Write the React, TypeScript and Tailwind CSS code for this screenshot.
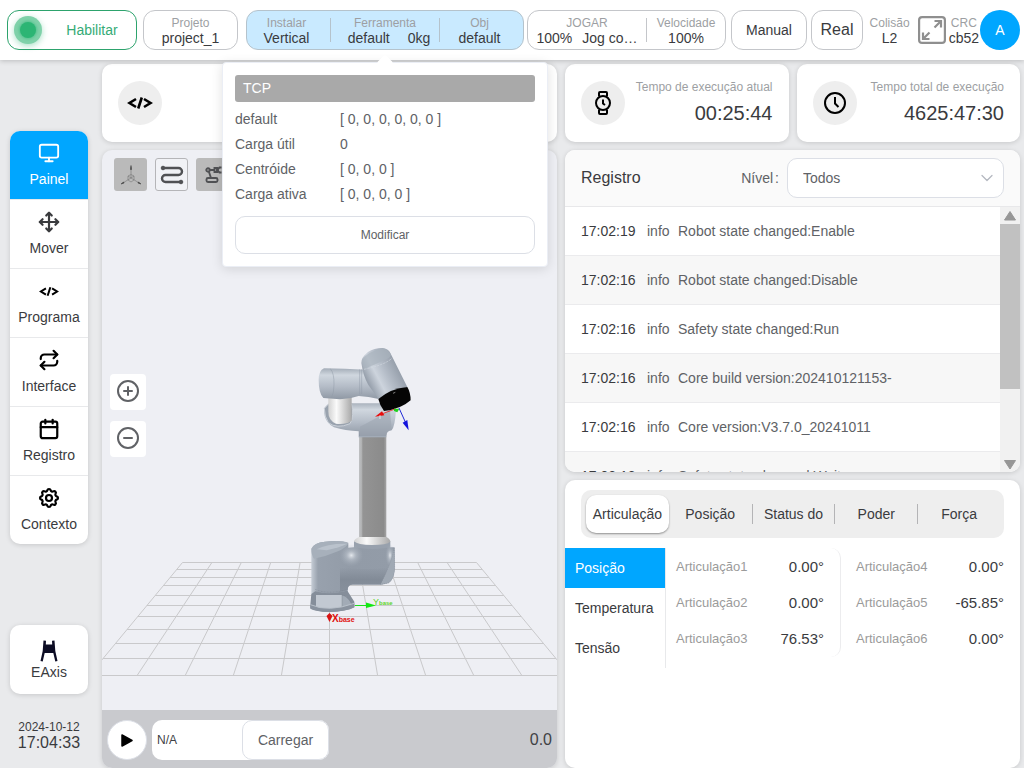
import type { ReactNode } from "react";
import {
  Calendar,
  ChevronDown,
  CircleMinus,
  CirclePlus,
  Monitor,
  Move,
  Repeat,
} from "lucide-react";
import { TbSettings } from "react-icons/tb";

const LOGS = [
  { time: "17:02:19", level: "info", message: "Robot state changed:Enable" },
  { time: "17:02:16", level: "info", message: "Robot state changed:Disable" },
  { time: "17:02:16", level: "info", message: "Safety state changed:Run" },
  { time: "17:02:16", level: "info", message: "Core build version:202410121153-" },
  { time: "17:02:16", level: "info", message: "Core version:V3.7.0_20241011" },
  { time: "17:02:13", level: "info", message: "Safety state changed:Wait" },
];

const TCP_ROWS = [
  ["default", "[ 0, 0, 0, 0, 0, 0 ]"],
  ["Carga útil", "0"],
  ["Centróide", "[ 0, 0, 0 ]"],
  ["Carga ativa", "[ 0, 0, 0, 0 ]"],
];

const JOINTS_LEFT = [
  ["Articulação1", "0.00°"],
  ["Articulação2", "0.00°"],
  ["Articulação3", "76.53°"],
];

const JOINTS_RIGHT = [
  ["Articulação4", "0.00°"],
  ["Articulação5", "-65.85°"],
  ["Articulação6", "0.00°"],
];

function CodeIcon({ className }: { className: string }) {
  return (
    <svg viewBox="0 0 26 14" fill="none" stroke="currentColor" strokeWidth="2.6" className={className} aria-hidden="true">
      <path d="M9 3 L2.500 7 L9 11" />
      <path d="M17 3 L23.500 7 L17 11" />
      <path d="M14.800 1.500 L11.200 12.500" />
    </svg>
  );
}

function AxesIcon() {
  return (
    <svg viewBox="0 0 24 24" fill="none" stroke="#777" strokeWidth="0.6" className="size-6" aria-hidden="true">
      <path d="M12 15V4M12 15 3 20.500M12 15 21 20.500" />
      <path d="M12 11.500 15 13v4l-3 2-3-2v-4zM9 13l3 2 3-2" />
      <path d="M11.500 6.500 12 2.500l.5 4zM2 21l2.500-2 .6 1zM22 21l-2.500-2-.6 1z" fill="#444" stroke="#444" />
    </svg>
  );
}

function PathIcon() {
  return (
    <svg viewBox="0 0 24 20" fill="none" stroke="#505154" strokeWidth="2.4" className="h-5 w-6" aria-hidden="true">
      <path d="M3 3h15.500a3.500 3.500 0 0 1 0 7h-13a3.500 3.500 0 0 0 0 7H21" />
      <circle cx="3" cy="3" r="1.800" fill="#505154" strokeWidth="1" />
      <circle cx="21" cy="17" r="1.800" fill="#505154" strokeWidth="1" />
    </svg>
  );
}

function ArmIcon() {
  return (
    <svg viewBox="0 0 20 18" fill="none" stroke="#505154" strokeWidth="1.9" className="h-[18px] w-5" aria-hidden="true">
      <circle cx="5" cy="4" r="1.700" />
      <path d="M6.500 4H11M6 6l2 6" />
      <rect x="3.500" y="12" width="11" height="4" rx="1.500" />
      <path d="M11.500 1v6M11.500 2h2.500v4h-2.500M18.500 1.500H16.500L15 3v2l1.500 1.500h2" />
    </svg>
  );
}

function GantryIcon() {
  return (
    <svg viewBox="0 0 18 22" fill="#0c0c24" className="h-[22px] w-[18px]" aria-hidden="true">
      <path d="M3.500 0.500 6 .8 5.800 4.500h6.400L12 .8 14.500.5 15.300 11 17.500 21l-2.200.5L13.300 13H4.700L2.700 21.500.5 21 2.700 11z" />
    </svg>
  );
}

function WatchIcon() {
  return (
    <svg viewBox="0 0 24 26" fill="none" stroke="black" strokeWidth="2" className="h-[26px] w-6" aria-hidden="true">
      <circle cx="12" cy="13" r="7" />
      <path d="M12 9.500v4l2 1.500M8 6.500V3a1 1 0 0 1 1-1h6a1 1 0 0 1 1 1v3.500M8 19.500V23a1 1 0 0 0 1 1h6a1 1 0 0 0 1-1v-3.500" />
    </svg>
  );
}

function ClockIcon() {
  return (
    <svg viewBox="0 0 24 24" fill="none" stroke="black" strokeWidth="2" className="size-6" aria-hidden="true">
      <circle cx="12" cy="12" r="10" />
      <path d="M12 6v6.500l3.500 3.500" />
    </svg>
  );
}

function ExpandIcon() {
  return (
    <svg viewBox="0 0 28 28" fill="none" stroke="#8f8f8f" strokeWidth="2.2" className="size-7" aria-hidden="true">
      <rect x="1.100" y="1.100" width="25.800" height="25.800" rx="3" />
      <path d="M16.500 11.500 23 5M16.500 5H23v6.500M11.500 16.500 5 23M5 16.500V23h6.500" />
    </svg>
  );
}

const GRID_ROWS = [562, 569, 577, 585, 595, 605, 616, 629, 643, 658, 675];
const GRID_COLUMNS = [-5, -4, -3, -2, -1, 0, 1, 2, 3, 4, 5];

function RobotScene() {
  return (
    <svg viewBox="102 150 455 560" className="absolute inset-0 h-full w-full" role="img" aria-label="Robô 3D">
      <defs>
        <linearGradient id="tube" x1="0" x2="1" y1="0" y2="0">
          <stop offset="0" stopColor="#bfc1c3" />
          <stop offset="0.100" stopColor="#b0b1b2" />
          <stop offset="0.140" stopColor="#949494" />
          <stop offset="0.900" stopColor="#8b8b8b" />
          <stop offset="1" stopColor="#a5a5a5" />
        </linearGradient>
        <linearGradient id="shellV" x1="0" x2="0" y1="0" y2="1">
          <stop offset="0" stopColor="#a4adb8" />
          <stop offset="0.220" stopColor="#d0d7df" />
          <stop offset="0.600" stopColor="#b3bbc6" />
          <stop offset="1" stopColor="#8f98a4" />
        </linearGradient>
        <linearGradient id="shellTilt" gradientUnits="userSpaceOnUse" x1="228" y1="145" x2="325" y2="95">
          <stop offset="0" stopColor="#98a1ad" />
          <stop offset="0.300" stopColor="#cdd4dd" />
          <stop offset="0.550" stopColor="#b5bdc8" />
          <stop offset="1" stopColor="#8f98a4" />
        </linearGradient>
        <linearGradient id="white" x1="0" x2="1" y1="0" y2="0">
          <stop offset="0" stopColor="#d2d2d2" />
          <stop offset="0.350" stopColor="#fafafa" />
          <stop offset="1" stopColor="#a9a9a9" />
        </linearGradient>
        <linearGradient id="base" x1="0" x2="1" y1="0" y2="0">
          <stop offset="0" stopColor="#c5ccd5" />
          <stop offset="0.080" stopColor="#98a1ad" />
          <stop offset="0.500" stopColor="#929ba7" />
          <stop offset="1" stopColor="#939ca8" />
        </linearGradient>
        <linearGradient id="underside" x1="0" x2="0" y1="0" y2="1">
          <stop offset="0" stopColor="#828b97" stopOpacity="0" />
          <stop offset="0.500" stopColor="#828b97" />
          <stop offset="1" stopColor="#87909c" />
        </linearGradient>
        <radialGradient id="glow">
          <stop offset="0" stopColor="#eef1f5" stopOpacity="0.900" />
          <stop offset="0.400" stopColor="#c5ccd5" stopOpacity="0.500" />
          <stop offset="1" stopColor="#a5aeba" stopOpacity="0" />
        </radialGradient>
      </defs>

      {/* Floor grid */}
      <g stroke="#c9c9cb" strokeWidth="1">
        {GRID_ROWS.map((y) => {
          const half = 147 + ((y - 562) / 113) * 93.5;
          return <line key={y} x1={329.5 - half} x2={329.5 + half} y1={y + 0.5} y2={y + 0.5} />;
        })}
        {GRID_COLUMNS.map((n) => (
          <line key={n} x1={329.5 + n * 29.4} y1="562.5" x2={329.5 + n * 48.1} y2="675.5" />
        ))}
      </g>

      {/* Base and shoulder */}
      <g transform="translate(290 480) scale(0.3333)">
        <path d="M207 -145H289V185H207z" fill="url(#tube)" />
        <path d="M192 184H301V212H192z" fill="#98a1ad" />
        <path d="M192 184Q194 176 207 171H289Q301 177 301 185Q290 195 246 195Q202 195 192 184z" fill="url(#white)" />
        <path d="M64 206Q72 188 105 185Q155 180 175 190V203L192 202Q246 212 301 202L314 202V270Q311 300 296 309L275 314H188Q173 314 173 330V342H64z" fill="url(#base)" />
        <path d="M150 262Q240 272 300 262L290 304L272 313H188Q173 314 173 330L150 335z" fill="url(#underside)" />
        <ellipse cx="184" cy="226" rx="36" ry="34" fill="url(#glow)" />
        <ellipse cx="300" cy="226" rx="14" ry="34" fill="url(#glow)" />
        <path d="M64 206Q72 188 105 185Q155 180 175 188Q172 203 140 215Q105 230 72 236Q64 225 64 206z" fill="#a7b0bb" />
        <path d="M80 208Q110 190 172 191Q150 202 110 211z" fill="#bac2cc" />
        <path d="M313 205Q303 252 272 313L296 309Q314 295 314 262z" fill="#a0a9b4" stroke="#7b8490" strokeDasharray="3 3" />
        <path d="M75 328Q115 345 172 329" fill="none" stroke="#737c89" strokeDasharray="6 3" />
        <path d="M64 342L76 334Q115 347 172 332L193 365V382Q170 395 120 396Q75 395 61 384V374z" fill="#858e9a" />
        <path d="M78 345H156V385H78z" fill="#c2c9d2" />
        <path d="M156 345Q176 350 186 375L156 384z" fill="#a2abb6" stroke="#6e7784" />
        <path d="M61 374Q115 398 193 370V382Q165 395 120 396Q75 395 61 386z" fill="#8a939f" />
        <path d="M61 374Q115 398 193 370" fill="none" stroke="#b9c1ca" strokeWidth="3" />
      </g>

      {/* Elbow, wrist and flange */}
      <g transform="translate(290 330) scale(0.3333)">
        <path d="M206 290H289V322H206z" fill="#a2abb7" />
        <path d="M102 250Q106 225 128 217L190 220H310L318 240Q315 290 305 301Q290 302 288 318H207V304Q165 302 132 292Q106 278 102 250z" fill="url(#shellV)" />
        <path d="M210 290Q250 270 300 240L305 300Q290 302 288 318H210z" fill="#9ca5b1" opacity="0.600" />
        <path d="M103 235Q116 218 130 213L184 220Q194 258 180 281Q140 298 115 278Q103 260 103 235z" fill="#99a2ae" stroke="#cbd1d9" strokeWidth="3" />
        <path d="M115 200H185V272Q165 285 138 281Q115 271 115 245z" fill="url(#white)" />
        <path d="M86 150Q86 122 102 115Q165 116 226 119L266 207Q235 200 206 198Q180 207 150 208L100 204Q86 190 86 150z" fill="url(#shellV)" />
        <path d="M121 116Q133 130 132 165Q132 190 124 204M209 118V194M215 118V192" fill="none" stroke="#929ba7" strokeWidth="1.500" />
        <path d="M214 99Q213 83 234 66Q252 54 278 54Q296 57 301 69L352 171Q315 180 266 207L235 165Q220 140 214 99z" fill="url(#shellTilt)" />
        <path d="M216 90Q230 66 278 54Q296 57 303 74Q302 82 292 86Q250 106 222 116z" fill="#aab3be" opacity="0.700" />
        <path d="M222 118Q285 105 307 84" fill="none" stroke="#d2d8df" strokeWidth="2" strokeDasharray="7 3" />
        <path d="M265 207Q303 175 352 171Q362 188 362 211Q332 238 282 243Q270 228 265 207z" fill="#050505" />
        <path d="M309 190L316 187" stroke="#bbb" strokeWidth="2" />
        <path d="M318 236L275 252" stroke="#e00" strokeWidth="2" />
        <path d="M255 260L276 244L283 256z" fill="#e80c0c" />
        <path d="M270 255V267" stroke="#fff" strokeWidth="2" />
        <path d="M312 236H328L322 247L312 243z" fill="#1fd21f" />
        <path d="M327 234L346 276" stroke="#1e28d6" strokeWidth="3" />
        <path d="M338 278L352 270L356 301z" fill="#1414dd" />
      </g>

      {/* Base frame axes */}
      <path d="M355 605.500H367" stroke="#1be01b" strokeWidth="1" />
      <path d="M366 602.500L376 605.500L366 608z" fill="#14e814" />
      <path d="M326.500 616L329.500 613L332.500 616L329.500 622z" fill="#d91414" />
      <g fontFamily="Liberation Sans, Arial, sans-serif" fontWeight="700">
        <text x="332" y="622" fontSize="10" fill="#e01010">
          X<tspan fontSize="7">base</tspan>
        </text>
        <text x="373" y="605" fontSize="9" fontWeight="400" fill="#5fd42a">
          Y<tspan fontSize="6" fontWeight="700">base</tspan>
        </text>
      </g>
    </svg>
  );
}

function Stat({ label, children }: { label: string; children: ReactNode }) {
  return (
    <div className="text-center">
      <div className="text-xs leading-4 text-[#9d9fa3]">{label}</div>
      <div className="text-sm leading-[15px] whitespace-nowrap text-[#3a3b3e]">{children}</div>
    </div>
  );
}

function TcpPopover() {
  return (
    <div className="absolute top-[51px] left-1/2 z-10 w-[326px] -translate-x-1/2 rounded border border-[#ebeef5] bg-white p-3 text-left text-sm text-[#606266] shadow-[0_2px_12px_rgba(0,0,0,0.12)]">
      <div className="absolute -top-1.5 left-1/2 size-3 -translate-x-1/2 rotate-45 rounded-xs bg-white" />
      <h2 className="relative rounded-[3px] bg-[#a9a9a9] px-2 text-sm leading-[27px] text-white">TCP</h2>
      <dl className="mt-[5px] leading-[25px]">
        {TCP_ROWS.map(([name, value]) => (
          <div key={name} className="flex">
            <dt className="w-[105px]">{name}</dt>
            <dd>{value}</dd>
          </div>
        ))}
      </dl>
      <button type="button" className="mt-[9px] h-[38px] w-full rounded-[10px] border border-[#dcdfe6] text-xs">
        Modificar
      </button>
    </div>
  );
}

function TopBar() {
  return (
    <header className="relative z-20 flex h-[60px] shrink-0 items-center bg-white pr-1 pl-[7px] shadow-[0_1px_5px_rgba(0,0,0,0.2)]">
      <button type="button" className="flex h-10 w-[130px] items-center rounded-xl border border-[#2da36d] pl-1.5 text-sm text-[#35ab76]">
        <span className="flex size-7 items-center justify-center rounded-full bg-[#7fd1a9] shadow-[0_2px_6px_rgba(43,180,115,0.4)]">
          <span className="size-4 rounded-full bg-[#2cb574] shadow-[0_0_3px_1px_#4fc18c]" />
        </span>
        <span className="flex-1 pl-1.5">Habilitar</span>
      </button>
      <div className="ml-1.5 flex h-10 w-[95px] items-center justify-center rounded-xl border border-[#c4c6ca]">
        <Stat label="Projeto">project_1</Stat>
      </div>
      <div className="ml-2 flex h-10 w-[278px] items-center rounded-xl border border-[#b5c3cc] bg-[#c9eaff]">
        <div className="flex h-6 w-[84px] items-center justify-center border-r border-[#b5c3cc] pr-1">
          <Stat label="Instalar">Vertical</Stat>
        </div>
        <div className="relative flex h-6 w-[109px] items-center justify-center border-r border-[#b5c3cc]">
          <Stat label="Ferramenta">
            <span className="flex gap-[18px] pl-2">
              <span>default</span>
              <span>0kg</span>
            </span>
          </Stat>
          <div className="absolute -top-[7px] left-1/2">
            <TcpPopover />
          </div>
        </div>
        <div className="flex flex-1 items-center justify-center pr-1">
          <Stat label="Obj">default</Stat>
        </div>
      </div>
      <div className="ml-[3px] flex h-10 w-[199px] items-center rounded-xl border border-[#c4c6ca]">
        <div className="flex h-6 w-[119px] items-center justify-center border-r border-[#c4c6ca]">
          <Stat label="JOGAR">
            <span className="flex gap-[10px]">
              <span>100%</span>
              <span>Jog co…</span>
            </span>
          </Stat>
        </div>
        <div className="flex flex-1 items-center justify-center">
          <Stat label="Velocidade">100%</Stat>
        </div>
      </div>
      <button type="button" className="ml-[5px] h-10 w-[76px] rounded-xl border border-[#c4c6ca] text-sm text-[#3a3b3e]">
        Manual
      </button>
      <button type="button" className="ml-1 h-10 w-[52px] rounded-xl border border-[#c4c6ca] text-base text-[#3a3b3e]">
        Real
      </button>
      <div className="ml-auto flex items-center">
        <Stat label="Colisão">L2</Stat>
        <button type="button" aria-label="Tela cheia" className="mr-[3px] ml-2">
          <ExpandIcon />
        </button>
        <Stat label="CRC">cb52</Stat>
        <button type="button" className="ml-px size-10 rounded-full bg-[#00a6ff] text-sm text-white">
          A
        </button>
      </div>
    </header>
  );
}

const NAV_ITEMS = [
  { label: "Painel", icon: <Monitor size={22} strokeWidth={2} /> },
  { label: "Mover", icon: <Move size={22} strokeWidth={2.4} /> },
  { label: "Programa", icon: <CodeIcon className="h-[11px] w-5 text-black" /> },
  { label: "Interface", icon: <Repeat size={22} strokeWidth={2.4} color="black" /> },
  { label: "Registro", icon: <Calendar size={22} strokeWidth={2.4} color="black" /> },
  { label: "Contexto", icon: <TbSettings size={24} strokeWidth={2.2} color="black" /> },
];

function Sidebar() {
  return (
    <aside className="flex w-[102px] shrink-0 flex-col pr-[14px] pl-[10px]">
      <nav className="mt-[71px] overflow-hidden rounded-[10px] bg-white shadow-[0_1px_5px_rgba(0,0,0,0.15)]">
        {NAV_ITEMS.map((item, i) => (
          <a
            key={item.label}
            href="#"
            className={
              i === 0
                ? "flex h-[68px] flex-col items-center bg-[#00a6ff] pt-[10px] text-sm text-white"
                : "flex h-[69px] flex-col items-center border-t border-[#e8e9eb] pt-[10px] text-sm text-[#3a3b3e]"
            }
          >
            <span className="flex h-6 items-center">{item.icon}</span>
            <span className="mt-1">{item.label}</span>
          </a>
        ))}
      </nav>
      <a href="#" className="mt-auto flex h-[69px] flex-col items-center rounded-[10px] bg-white pt-[15px] text-sm text-[#3a3b3e] shadow-[0_1px_5px_rgba(0,0,0,0.15)]">
        <GantryIcon />
        EAxis
      </a>
      <div className="mt-[25px] mb-[17px] text-center whitespace-nowrap text-[#3a3b3e]">
        <div className="text-xs leading-4">2024-10-12</div>
        <div className="text-base leading-4">17:04:33</div>
      </div>
    </aside>
  );
}

function RobotPanel() {
  return (
    <section className="flex min-w-0 flex-1 flex-col gap-2">
      <div className="flex h-[78px] items-center rounded-[10px] bg-white px-4 shadow-[0_1px_5px_rgba(0,0,0,0.15)]">
        <div className="flex size-11 items-center justify-center rounded-full bg-[#eee]">
          <CodeIcon className="h-[14px] w-[26px] text-black" />
        </div>
      </div>
      <div className="flex flex-1 flex-col overflow-hidden rounded-[10px] bg-[#eeeff4] shadow-[0_1px_5px_rgba(0,0,0,0.15)]">
        <div className="relative flex-1">
          <RobotScene />
          <div className="absolute top-2 left-3 flex gap-2">
            <button type="button" aria-label="Eixos" className="flex size-[33px] items-center justify-center rounded-[3px] bg-[#bababa]">
              <AxesIcon />
            </button>
            <button type="button" aria-label="Trajetória" className="flex size-[33px] items-center justify-center rounded-[3px] border border-[#b5b5b8] bg-[#f1f2f6]">
              <PathIcon />
            </button>
            <button type="button" aria-label="Braço" className="flex size-[33px] items-center justify-center rounded-[3px] bg-[#bababa]">
              <ArmIcon />
            </button>
          </div>
          <div className="absolute top-56 left-2 flex flex-col gap-[11px] text-[#606266]">
            <button type="button" aria-label="Aproximar" className="flex size-9 justify-center rounded bg-white pt-[5px]">
              <CirclePlus size={24} />
            </button>
            <button type="button" aria-label="Afastar" className="flex size-9 justify-center rounded bg-white pt-[5px]">
              <CircleMinus size={24} />
            </button>
          </div>
        </div>
        <div className="flex h-[58px] items-center bg-[#c9cace] px-[5px] pt-0.5">
          <button type="button" aria-label="Executar" className="flex size-10 items-center justify-center rounded-full border border-[#dcdfe6] bg-white">
            <svg viewBox="0 0 12 13" className="h-[13px] w-3" aria-hidden="true">
              <path d="M1 1 11 6.500 1 12z" stroke="black" strokeWidth="1.500" strokeLinejoin="round" />
            </svg>
          </button>
          <div className="ml-[5px] flex h-10 w-[177px] rounded-[10px] bg-white">
            <input aria-label="Programa" defaultValue="N/A" className="w-[90px] pl-[5px] text-xs text-[#404144] outline-none" />
            <button type="button" className="flex-1 rounded-[10px] border border-[#dcdfe6] text-sm text-[#606266]">
              Carregar
            </button>
          </div>
          <span className="ml-auto text-base text-[#404144]">0.0</span>
        </div>
      </div>
    </section>
  );
}

function RuntimeCard({ label, value, children }: { label: string; value: string; children: ReactNode }) {
  return (
    <div className="flex h-[78px] flex-1 items-center justify-between rounded-[10px] bg-white px-4 shadow-[0_1px_5px_rgba(0,0,0,0.15)]">
      <div className="flex size-11 shrink-0 items-center justify-center rounded-full bg-[#eee]">{children}</div>
      <div className="text-right">
        <div className="text-xs leading-4 whitespace-nowrap text-[#9d9fa3]">{label}</div>
        <div className="mt-1 text-xl leading-7 text-[#3a3b3e]">{value}</div>
      </div>
    </div>
  );
}

function LogPanel() {
  return (
    <div className="overflow-hidden rounded-[10px] bg-white shadow-[0_1px_5px_rgba(0,0,0,0.15)]">
      <div className="flex h-[57px] items-center border-b border-[#e8e8ea] bg-[#fafafa] px-4">
        <h2 className="text-base text-[#3a3b3e]">Registro</h2>
        <label htmlFor="level" className="ml-auto flex gap-0.5 text-sm text-[#606266]">
          <span>Nível</span>
          <span>:</span>
        </label>
        <div className="relative ml-2">
          <select id="level" className="h-10 w-[217px] appearance-none rounded-[10px] border border-[#dcdfe6] bg-white pl-[15px] text-sm text-[#606266]">
            <option>Todos</option>
          </select>
          <ChevronDown size={20} strokeWidth={1.5} color="#b4b8c0" className="pointer-events-none absolute top-[10px] right-[7px]" />
        </div>
      </div>
      <div className="flex h-[265px]">
        <ul className="min-w-0 flex-1 overflow-hidden">
          {LOGS.map((log, i) => (
            <li
              key={i}
              className="flex h-[49px] items-center border-b border-[#ebebed] pl-4 text-sm text-[#606266] even:bg-[#f7f7f7]"
            >
              <span className="w-[66px] text-[#3a3b3e]">{log.time}</span>
              <span className="w-[31px]">{log.level}</span>
              <span>{log.message}</span>
            </li>
          ))}
        </ul>
        {/* Scroll bar */}
        <div className="flex w-5 flex-col bg-[#f1f1f1]">
          <svg viewBox="0 0 20 17" className="h-[17px] w-5" aria-hidden="true">
            <path d="M4.500 13 10 4.500 15.500 13z" fill="#969696" stroke="#969696" strokeLinejoin="round" />
          </svg>
          <div className="h-[165px] bg-[#c1c1c1]" />
          <svg viewBox="0 0 20 17" className="mt-auto h-[17px] w-5" aria-hidden="true">
            <path d="M4.500 5.500 10 14 15.500 5.500z" fill="#969696" stroke="#969696" strokeLinejoin="round" />
          </svg>
        </div>
      </div>
    </div>
  );
}

function JointList({ rows }: { rows: string[][] }) {
  return (
    <dl className="pt-px">
      {rows.map(([name, value]) => (
        <div key={name} className="flex h-9 items-center justify-between">
          <dt className="text-[13px] text-[#9b9b9b]">{name}</dt>
          <dd className="text-[15px] text-[#3a3b3e]">{value}</dd>
        </div>
      ))}
    </dl>
  );
}

function JointPanel() {
  return (
    <div className="flex-1 rounded-[10px] bg-white pt-[10px] shadow-[0_1px_5px_rgba(0,0,0,0.15)]">
      <div role="tablist" className="mx-4 grid h-12 grid-cols-5 items-center rounded-[10px] bg-[#eee] pr-1 pl-[5px] text-sm text-[#3a3b3e]">
        <button type="button" role="tab" aria-selected="true" className="h-[38px] rounded-[10px] bg-white shadow-[0_1px_2px_rgba(0,0,0,0.4)]">
          Articulação
        </button>
        <button type="button" role="tab" aria-selected="false" className="h-5">
          Posição
        </button>
        {["Status do", "Poder", "Força"].map((tab) => (
          <button key={tab} type="button" role="tab" aria-selected="false" className="h-5 border-l border-[#b4b4b6] whitespace-nowrap">
            {tab}
          </button>
        ))}
      </div>
      <div className="mt-[10px] flex">
        <div className="flex w-[101px] shrink-0 flex-col border-r border-[#e8e9eb] text-sm text-[#3a3b3e]">
          <button type="button" className="h-10 bg-[#00a6ff] pl-[10px] text-left text-white">
            Posição
          </button>
          <button type="button" className="h-10 pl-[10px] text-left">
            Temperatura
          </button>
          <button type="button" className="h-10 pl-[10px] text-left">
            Tensão
          </button>
        </div>
        <div className="grid flex-1 grid-cols-[175fr_179fr] items-start">
          <div className="rounded-[10px] border-r border-[#ececee] pr-4 pl-[10px]">
            <JointList rows={JOINTS_LEFT} />
          </div>
          <div className="pr-4 pl-[15px]">
            <JointList rows={JOINTS_RIGHT} />
          </div>
        </div>
      </div>
    </div>
  );
}

export default function App() {
  return (
    <div className="flex h-screen min-h-[768px] flex-col overflow-hidden bg-[#e9eaec] font-['Liberation_Sans',Arial,sans-serif]">
      <TopBar />
      <div className="flex min-h-0 flex-1 pr-1">
        <Sidebar />
        <main className="flex min-w-0 flex-1 gap-2 pt-1">
          <RobotPanel />
          <section className="flex min-w-0 flex-1 flex-col gap-2">
            <div className="flex gap-2">
              <RuntimeCard label="Tempo de execução atual" value="00:25:44">
                <WatchIcon />
              </RuntimeCard>
              <RuntimeCard label="Tempo total de execução" value="4625:47:30">
                <ClockIcon />
              </RuntimeCard>
            </div>
            <LogPanel />
            <JointPanel />
          </section>
        </main>
      </div>
    </div>
  );
}
